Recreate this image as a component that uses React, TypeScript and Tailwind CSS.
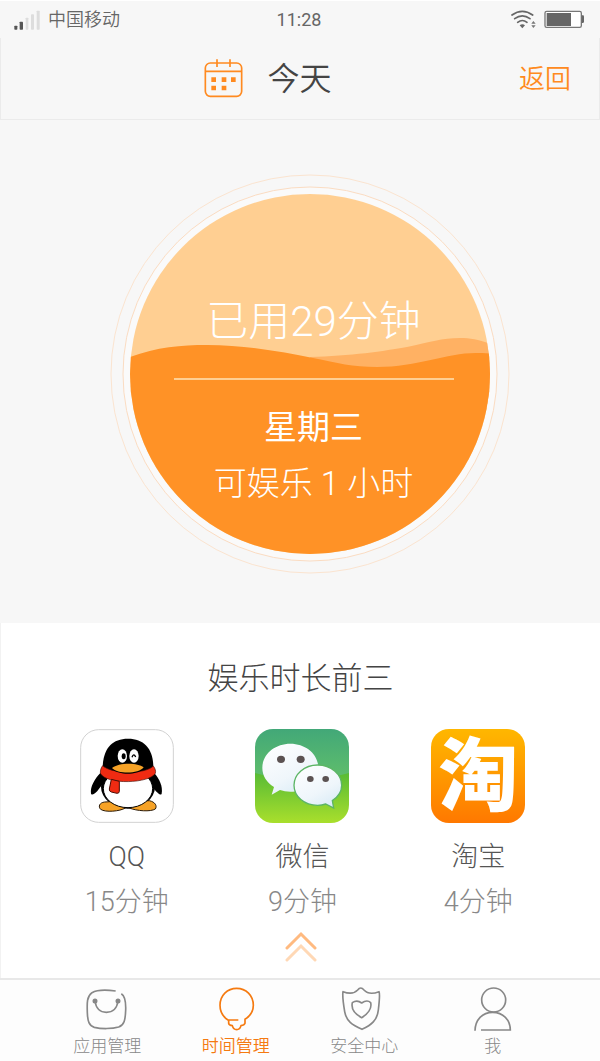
import type { ReactNode } from 'react';

interface AppUsage {
  name: string;
  time: string;
  icon: ReactNode;
}

interface NavItem {
  label: string;
  icon: ReactNode;
  active?: boolean;
}

function StatusBar() {
  return (
    <div className="grid h-[38px] grid-cols-3 items-center border-t border-white pr-4 pl-[14px] text-[18px] text-[#666]">
      <div className="flex items-center gap-2">
        <svg viewBox="44 28 78 60" className="h-5 w-[26px]" aria-hidden="true">
          <rect x="45" y="75" width="9" height="12" rx="2" fill="#555" />
          <rect x="61" y="63" width="10" height="24" rx="2" fill="#555" />
          <rect x="79" y="51" width="8" height="36" rx="2" fill="#ddd" />
          <rect x="95" y="41" width="9" height="46" rx="2" fill="#ddd" />
          <rect x="112" y="30" width="9" height="57" rx="2" fill="#ddd" />
        </svg>
        <span className="font-[350]">中国移动</span>
      </div>
      <time className="text-center">11:28</time>
      <svg viewBox="636 28 219 57" className="h-[19px] w-[73px] justify-self-end" fill="none" aria-hidden="true">
        <g stroke="#666" strokeWidth="5" strokeLinecap="round">
          <path d="M639 43 Q670 21 701 43" />
          <path d="M647 54 Q670 37 693 54" />
          <path d="M656 65 Q670 54 684 65" />
        </g>
        <path d="M662 74 Q670 68 678 74 L670 83 Z" fill="#666" />
        <path d="M697 69 L703 61 L710 69 Z M697 74 H710 L703 82 Z" fill="#777" />
        <rect x="738" y="32" width="109" height="48" rx="5" fill="#fff" stroke="#777" strokeWidth="4" />
        <rect x="743" y="37" width="73" height="39" fill="#666" />
        <path d="M848 44 H852 Q855 44 855 48 V62 Q855 67 852 67 H848 Z" fill="#666" />
      </svg>
    </div>
  );
}

function Header() {
  return (
    <header className="flex h-[82px] items-center justify-between border-x border-b border-[#ebebeb] pl-4 pr-7">
      <span />
      <div className="flex items-center gap-6">
        <svg viewBox="611 176 117 117" className="size-[39px]" fill="none" stroke="#ff8a20" aria-hidden="true">
          <rect x="615" y="188" width="109" height="100" rx="15" strokeWidth="5" />
          <path d="M615 213 H724 M650 177 V200 M689 177 V200" strokeWidth="5" />
          <path d="M633 238 H647 M664 238 H678 M692 238 H706 M633 263 H647 M664 263 H678" strokeWidth="14" />
        </svg>
        <h1 className="text-[32px] leading-10 font-[350] text-[#444]">今天</h1>
      </div>
      <button type="button" className="text-[26px] leading-10 font-[350] text-[#ff8a20]">
        返回
      </button>
    </header>
  );
}

function UsageDial() {
  return (
    <section className="flex justify-center pt-[54px] pb-[49px] pl-5">
      <div className="grid w-[400px]">
        <svg viewBox="0 0 400 400" className="col-start-1 row-start-1 w-full" fill="none" aria-hidden="true">
          <defs>
            <clipPath id="dial">
              <circle cx="200" cy="200" r="180" />
            </clipPath>
          </defs>
          <circle cx="200" cy="200" r="199" stroke="#fbe4d0" />
          <circle cx="200" cy="200" r="187" fill="#fafafa" stroke="#fbdcc2" />
          <g clipPath="url(#dial)">
            <rect width="400" height="400" fill="#ffcf92" />
            <path
              d="M200 183 C240 182 275 177 297 173 C320 168 332 164 350 164 C365 164 374 167 400 178 V230 H200 Z"
              fill="#ffb163"
            />
            <path
              d="M0 192 C35 174 65 171 97 171 C135 171 172 178 203 184 C228 189 242 193 267 193 C308 193 336 179 366 179 C374 179 380 179 400 182 V400 H0 Z"
              fill="#ff9226"
            />
          </g>
        </svg>
        <div className="col-start-1 row-start-1 flex flex-col items-center pt-[123px] pl-[7px] text-white">
          <p className="text-[42px] leading-[50px] font-light">已用29分钟</p>
          <hr className="mt-[31px] w-[280px] border-t-2 border-[#ffcf92]" />
          <p className="mt-7 text-[33px] leading-10">星期三</p>
          <p className="mt-4 text-[33px] leading-10 font-light">可娱乐 1 小时</p>
        </div>
      </div>
    </section>
  );
}

function QQIcon() {
  return (
    <svg viewBox="30 27 282 282" className="size-[94px]" aria-hidden="true">
      <rect x="32" y="29" width="278" height="278" rx="54" fill="#fff" stroke="#d2d2d2" strokeWidth="3" />
      <path d="M92 158 C74 176 60 200 63 221 C67 229 79 218 86 208 L112 174 Z" fill="#000" />
      <path d="M252 158 C268 176 279 198 275 221 C272 229 261 218 253 208 L230 174 Z" fill="#000" />
      <ellipse cx="174" cy="200" rx="81" ry="66" fill="#000" />
      <g stroke="#2b1a08" strokeWidth="3" fill="#f6a226">
        <path d="M104 246 C88 248 84 260 92 268 C106 278 150 274 166 264 L140 244 Z" />
        <path d="M238 242 C256 246 262 258 256 267 C242 276 200 273 178 264 L204 244 Z" />
      </g>
      <ellipse cx="174" cy="206" rx="74" ry="57" fill="#fff" stroke="#000" strokeWidth="3" />
      <path d="M98 146 C98 88 124 56 174 56 C224 56 250 88 250 142 C244 180 106 180 98 146 Z" fill="#000" />
      <ellipse cx="157" cy="108" rx="14" ry="20" fill="#fff" />
      <ellipse cx="192" cy="108" rx="14" ry="20" fill="#fff" />
      <ellipse cx="161" cy="109" rx="6" ry="9" fill="#000" />
      <path d="M186 112 Q191 98 197 111" fill="none" stroke="#000" strokeWidth="4" />
      <path
        d="M98 137 C124 162 224 164 250 138 C256 146 258 154 256 160 C240 190 110 196 91 160 C91 150 93 143 98 137 Z"
        fill="#f02b12"
        stroke="#4a0c04"
        strokeWidth="2"
      />
      <path d="M128 148 C145 166 203 166 219 147 Z" fill="#000" />
      <path d="M126 144 C145 128 202 127 221 142 C207 162 143 163 126 144 Z" fill="#f6a226" />
      <path
        d="M124 178 L148 184 V214 Q148 220 141 220 L124 216 Q117 214 118 207 Z"
        fill="#f02b12"
        stroke="#4a0c04"
        strokeWidth="3"
      />
    </svg>
  );
}

function WeChatIcon() {
  return (
    <svg viewBox="33 28 282 282" className="size-[94px]" aria-hidden="true">
      <defs>
        <linearGradient id="wechat-top" x2="0" y2="1">
          <stop stopColor="#42a878" />
          <stop offset="1" stopColor="#62c06a" />
        </linearGradient>
        <linearGradient id="wechat-bottom" x2="0" y2="1">
          <stop stopColor="#58bb35" />
          <stop offset="1" stopColor="#a9df2c" />
        </linearGradient>
        <linearGradient id="bubble" x1="0.2" x2="0.8" y2="1">
          <stop stopColor="#fdfeff" />
          <stop offset="0.6" stopColor="#eff6fb" />
          <stop offset="1" stopColor="#d8ebf6" />
        </linearGradient>
        <clipPath id="wechat-tile">
          <rect x="33" y="28" width="282" height="282" rx="54" />
        </clipPath>
      </defs>
      <g clipPath="url(#wechat-tile)">
        <rect x="33" y="28" width="282" height="160" fill="url(#wechat-top)" />
        <path d="M33 160 Q174 200 315 160 V310 H33 Z" fill="url(#wechat-bottom)" />
      </g>
      <path
        d="M139 72 C186 72 223 104 223 144 C223 184 186 216 139 216 Q122 216 108 211 L83 225 L90 202 C68 188 55 168 55 144 C55 104 92 72 139 72 Z"
        fill="url(#bubble)"
      />
      <path
        d="M221 136 C261 136 293 163 293 197 C293 216 282 232 265 243 L269 265 L245 253 Q234 257 221 257 C181 257 150 231 150 197 C150 163 181 136 221 136 Z"
        fill="url(#bubble)"
        stroke="#5cb565"
        strokeWidth="4"
      />
      <g fill="#5b5252">
        <ellipse cx="111" cy="119" rx="12" ry="11" />
        <ellipse cx="170" cy="119" rx="12" ry="11" />
        <ellipse cx="199" cy="178" rx="10" ry="9" />
        <ellipse cx="245" cy="178" rx="10" ry="9" />
      </g>
    </svg>
  );
}

function TaobaoIcon() {
  return (
    <div className="flex size-[94px] justify-center rounded-[18px] bg-linear-to-b from-[#ffb700] to-[#ff7800] text-[80px] leading-[96px] font-black text-white">
      淘
    </div>
  );
}

const apps: AppUsage[] = [
  { name: 'QQ', time: '15分钟', icon: <QQIcon /> },
  { name: '微信', time: '9分钟', icon: <WeChatIcon /> },
  { name: '淘宝', time: '4分钟', icon: <TaobaoIcon /> },
];

function TopApps() {
  return (
    <section className="flex flex-col items-center border-l border-[#f2f2f2] bg-white pt-9 pb-[15px]">
      <h2 className="text-[31px] leading-10 font-light text-[#444]">娱乐时长前三</h2>
      <ul className="mt-[30px] grid w-full grid-cols-3 pr-[34px] pl-[38px]">
        {apps.map((app) => (
          <li key={app.name} className="flex flex-col items-center text-[27px] leading-8 font-light">
            {app.icon}
            <span className="mt-[18px] text-[#555]">{app.name}</span>
            <span className="mt-[13px] text-[#888]">{app.time}</span>
          </li>
        ))}
      </ul>
      <button type="button" aria-label="展开" className="mt-[13px]">
        <svg viewBox="0 0 32 32" className="size-8" fill="none" strokeWidth="3" strokeLinecap="round">
          <path d="M2 29 L16 15 L30 29" stroke="#ffd8b5" />
          <path d="M2 17 L16 3 L30 17" stroke="#ffba80" />
        </svg>
      </button>
    </section>
  );
}

const navItems: NavItem[] = [
  {
    label: '应用管理',
    icon: (
      <svg viewBox="255 200 132 132" className="size-11" fill="none" stroke="currentColor" strokeWidth="5" aria-hidden="true">
        <path d="M347 212 C318 208 290 209 276 217 C260 229 261 248 262 277 C263 303 267 316 283 321 C304 326 336 326 356 320 C373 314 376 298 377 270 C378 244 376 227 364 220" />
        <path d="M285 242 C288 264 300 276 319 276 C338 276 351 264 354 242" />
        <circle cx="285" cy="242" r="5" fill="currentColor" />
        <circle cx="354" cy="242" r="5" fill="currentColor" />
      </svg>
    ),
  },
  {
    label: '时间管理',
    active: true,
    icon: (
      <svg viewBox="642 200 132 132" className="size-11" fill="none" stroke="currentColor" strokeWidth="5" aria-hidden="true">
        <path d="M715 299 H684 C668 289 660 273 660 255 C660 225 682 204 710 204 C738 204 760 225 760 255 C760 273 750 288 735 297 V309 Q733 315 723 316 C721 324 716 328 710 328 C704 328 699 324 697 316 Q687 315 686 309 V299" />
      </svg>
    ),
  },
  {
    label: '安全中心',
    icon: (
      <svg viewBox="127 200 132 132" className="size-11 overflow-visible" fill="none" stroke="currentColor" strokeWidth="5" strokeLinejoin="round" aria-hidden="true">
        <path d="M130 214 C148 221 163 221 174 209 Q183 197 193 209 C204 221 220 221 238 214 C241 220 239 244 236 269 C233 300 215 314 187 327 C157 314 140 302 135 274 C131 250 128 225 130 214 Z" />
        <path d="M186 248 C176 240 165 242 158 247 C154 265 165 281 186 292 C205 281 217 264 213 247 C206 240 196 241 186 248 Z" />
      </svg>
    ),
  },
  {
    label: '我',
    icon: (
      <svg viewBox="513 200 132 132" className="size-11" fill="none" stroke="currentColor" strokeWidth="5" aria-hidden="true">
        <circle cx="581" cy="239" r="36" />
        <path d="M525 331 C526 298 547 276 578 276 C609 276 631 298 631 329 H543" />
      </svg>
    ),
  },
];

function BottomNav() {
  return (
    <nav className="grid grid-cols-4 border-t-2 border-[#e8e8e8] bg-[#fdfdfd] px-[43px] pt-[7px] pb-[3px]">
      {navItems.map((item) => (
        <a
          key={item.label}
          href="#"
          aria-current={item.active ? 'page' : undefined}
          className={`flex flex-col items-center gap-[3px] text-[17px] leading-6 ${
            item.active ? 'font-[350] text-[#f57a10]' : 'font-light text-[#888]'
          }`}
        >
          {item.icon}
          <span>{item.label}</span>
        </a>
      ))}
    </nav>
  );
}

export default function App() {
  return (
    <div className="flex min-h-screen flex-col bg-[#f7f7f7] font-['Roboto','Noto_Sans_CJK_SC',sans-serif]">
      <StatusBar />
      <Header />
      <main className="flex-1">
        <UsageDial />
        <TopApps />
      </main>
      <BottomNav />
    </div>
  );
}
